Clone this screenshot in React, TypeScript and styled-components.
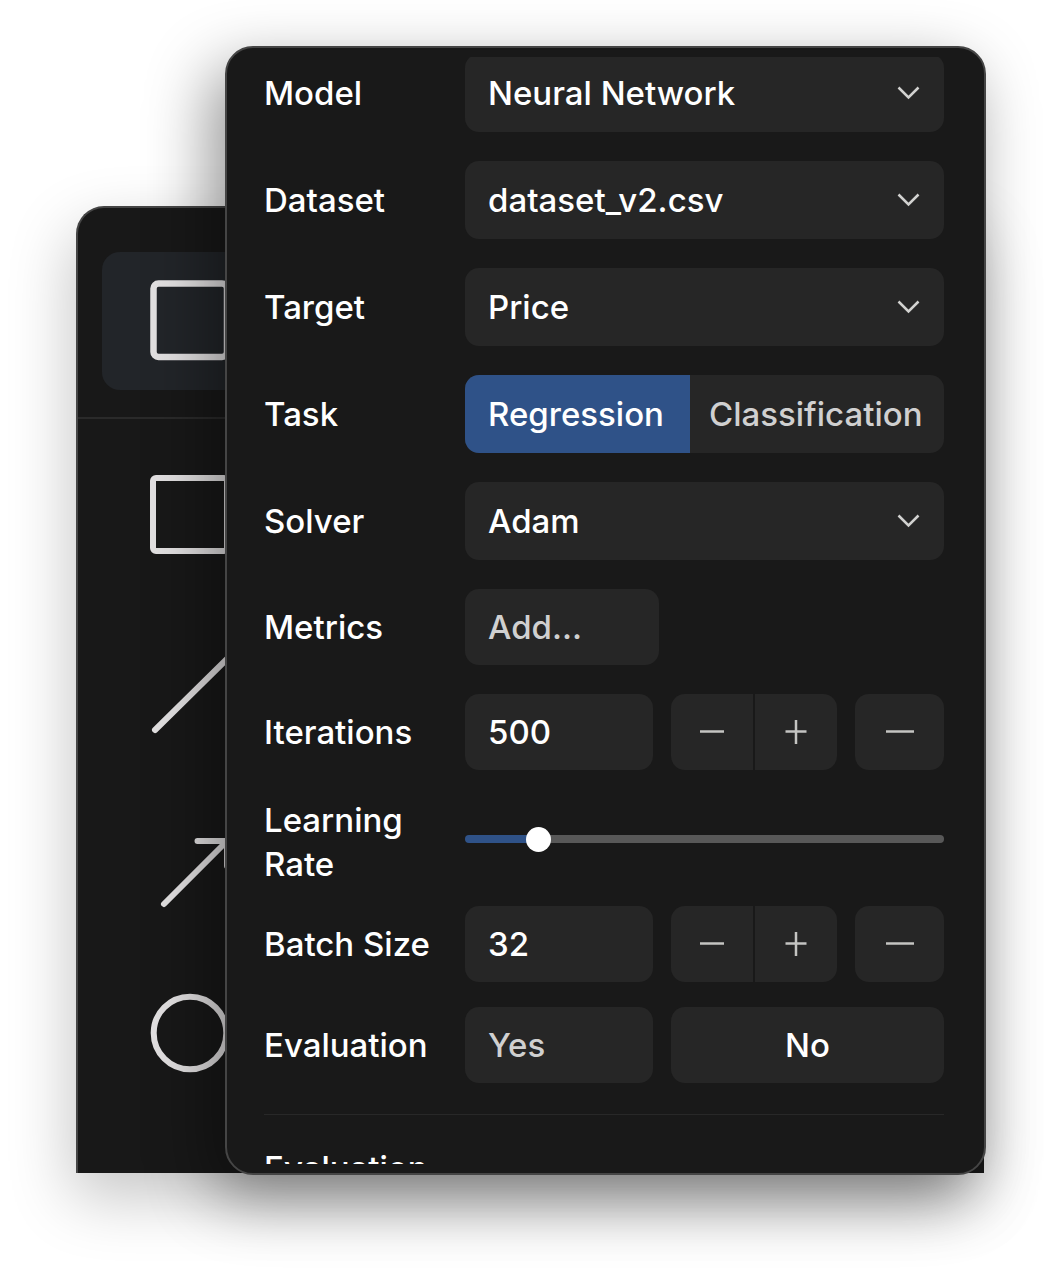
import React, { useState } from "react";
import styled, { createGlobalStyle } from "styled-components";

const color = {
  panel: "#191919",
  control: "#262626",
  border: "#454545",
  text: "#ffffff",
  muted: "#d0d0d0",
  accent: "#2f5288",
  icon: "#c4c4c2",
};

const GlobalStyle = createGlobalStyle`
  * { box-sizing: border-box; }
  body {
    margin: 0;
    background: #ffffff;
    font-family: Inter, "Liberation Sans", sans-serif;
  }
  button, input, select {
    font: inherit;
    color: inherit;
    border: 0;
    margin: 0;
    padding: 0;
    background: none;
  }
`;

const Stage = styled.main`
  display: grid;
  grid-template-columns: 76px 149px minmax(0, 1fr) 60px;
  grid-template-rows: 46px 160px auto 108px;
  min-height: 100vh;
  overflow: hidden;
`;

const ToolPanel = styled.nav`
  grid-column: 2 / 4;
  grid-row: 3;
  margin: 0 2px 2px 0;
  height: 0;
  min-height: calc(100% - 2px);
  border: 2px solid ${color.border};
  border-width: 2px 0 0 2px;
  border-radius: 28px 28px 0 0;
  background: #181818;
  box-shadow: -4px 24px 64px rgba(0, 0, 0, 0.23);
`;

const ToolGroup = styled.div<{ $header?: boolean }>`
  display: flex;
  flex-direction: column;
  gap: 35px;
  padding: ${(p) => (p.$header ? "44px 24px 27px" : "27px 24px")};
  border-bottom: ${(p) => (p.$header ? "2px solid #2a2a2a" : "0")};
`;

const ToolButton = styled.button<{ $active?: boolean }>`
  display: block;
  width: 176px;
  height: 138px;
  border-radius: 18px;
  background: ${(p) => (p.$active ? "#222529" : "transparent")};
`;

const ToolDrawing = styled.svg`
  display: block;
  fill: none;
  stroke: #e2e0e1;
  stroke-width: 6;
  stroke-linecap: round;
  stroke-linejoin: round;
`;

const SettingsPanel = styled.section`
  grid-column: 3;
  grid-row: 2 / 4;
  z-index: 1;
  padding: 9px 0;
  border: 2px solid ${color.border};
  border-radius: 28px;
  background: ${color.panel};
  color: ${color.text};
  font-size: 33px;
  font-weight: 500;
  line-height: 44px;
  box-shadow: -14px 22px 64px rgba(0, 0, 0, 0.42);
`;

const Viewport = styled.div`
  max-height: calc(100vh - 176px);
  overflow: hidden;
`;

const Form = styled.form`
  margin-top: -3px;
  padding: 0 40px 0 37px;
`;

const Row = styled.div<{ $gap?: number }>`
  display: grid;
  grid-template-columns: 201px minmax(0, 1fr);
  align-items: center;
  margin-top: ${(p) => p.$gap ?? 0}px;
`;

const Label = styled.label`
  padding-right: 24px;
`;

const SelectBox = styled.div`
  display: grid;
  align-items: center;
  height: 78px;
  border-radius: 14px;
  background: ${color.control};
`;

const Select = styled.select`
  grid-area: 1 / 1;
  width: 100%;
  height: 100%;
  padding: 0 64px 0 23px;
  border-radius: inherit;
  appearance: none;
`;

const Chevron = styled.svg`
  grid-area: 1 / 1;
  justify-self: end;
  margin-right: 24px;
  pointer-events: none;
  fill: none;
  stroke: #d2d2d0;
  stroke-width: 2.5;
`;

const Segments = styled.div`
  display: grid;
  grid-template-columns: 225fr 254fr;
  height: 78px;
  border-radius: 14px;
  overflow: hidden;
  background: ${color.control};
`;

const Segment = styled.button<{ $active?: boolean }>`
  padding: 0 19px 0 ${(p) => (p.$active ? 23 : 19)}px;
  text-align: left;
  white-space: nowrap;
  background: ${(p) => (p.$active ? color.accent : "transparent")};
  color: ${(p) => (p.$active ? color.text : color.muted)};
`;

const Controls = styled.div<{ $columns: string }>`
  display: grid;
  grid-template-columns: ${(p) => p.$columns};
  gap: 18px;
  height: 76px;
`;

const Field = styled.input`
  width: 100%;
  padding: 0 23px;
  border-radius: 14px;
  background: ${color.control};
`;

const Button = styled.button<{ $muted?: boolean; $start?: boolean }>`
  display: flex;
  align-items: center;
  justify-content: ${(p) => (p.$start ? "flex-start" : "center")};
  padding: 0 23px;
  border-radius: 14px;
  background: ${color.control};
  color: ${(p) => (p.$muted ? color.muted : color.text)};
`;

const Stepper = styled.div`
  display: grid;
  grid-template-columns: 1fr 1fr;
  gap: 2px;
  border-radius: 14px;
  overflow: hidden;
`;

const IconButton = styled.button<{ $single?: boolean }>`
  display: flex;
  align-items: center;
  justify-content: center;
  border-radius: ${(p) => (p.$single ? 14 : 0)}px;
  background: ${color.control};
`;

const Glyph = styled.svg`
  display: block;
  fill: none;
  stroke: ${color.icon};
  stroke-width: 2.5;
`;

const Slider = styled.input`
  width: 100%;
  height: 26px;
  margin-bottom: 6px;
  appearance: none;

  &::-webkit-slider-runnable-track {
    height: 8px;
    border-radius: 4px;
    background: linear-gradient(
      to right,
      ${color.accent} var(--fill),
      #585858 var(--fill)
    );
  }
  &::-webkit-slider-thumb {
    appearance: none;
    width: 25px;
    height: 25px;
    margin-top: -8px;
    border-radius: 50%;
    background: #ffffff;
  }
`;

const Divider = styled.hr`
  height: 1px;
  margin: 31px 0;
  border: 0;
  background: #282828;
`;

const SectionTitle = styled.h2`
  margin: 0;
  font: inherit;
`;

function SelectRow({ id, label, options, gap }: {
  id: string;
  label: string;
  options: string[];
  gap?: number;
}) {
  return (
    <Row $gap={gap}>
      <Label htmlFor={id}>{label}</Label>
      <SelectBox>
        <Select id={id} defaultValue={options[0]}>
          {options.map((option) => (
            <option key={option}>{option}</option>
          ))}
        </Select>
        <Chevron width="24" height="14" viewBox="0 0 24 14" aria-hidden="true">
          <path d="M2.5 1.5 12.5 11.5 22.5 1.5" />
        </Chevron>
      </SelectBox>
    </Row>
  );
}

function NumberRow({ id, label, initial, gap }: {
  id: string;
  label: string;
  initial: number;
  gap: number;
}) {
  const [value, setValue] = useState(initial);
  return (
    <Row $gap={gap}>
      <Label htmlFor={id}>{label}</Label>
      <Controls $columns="minmax(0, 1fr) 166px 89px">
        <Field
          id={id}
          inputMode="numeric"
          value={value}
          onChange={(e) => setValue(Number(e.target.value) || 0)}
        />
        <Stepper>
          <IconButton type="button" aria-label={`Decrease ${label}`} onClick={() => setValue(value - 1)}>
            <Glyph width="24" height="24" viewBox="0 0 24 24">
              <path d="M0 11.5H24" />
            </Glyph>
          </IconButton>
          <IconButton type="button" aria-label={`Increase ${label}`} onClick={() => setValue(value + 1)}>
            <Glyph width="24" height="24" viewBox="0 0 24 24">
              <path d="M1.5 11.5H22.5M12 0V24" />
            </Glyph>
          </IconButton>
        </Stepper>
        <IconButton $single type="button" aria-label={`Clear ${label}`} onClick={() => setValue(initial)}>
          <Glyph width="28" height="24" viewBox="0 0 28 24">
            <path d="M0 11.5H28" />
          </Glyph>
        </IconButton>
      </Controls>
    </Row>
  );
}

const tools = [
  { name: "Rectangle", shape: <rect x="51" y="32" width="74" height="73" rx="3" /> },
  { name: "Line", shape: <path d="M53 111 125 40" /> },
  { name: "Arrow", shape: <path d="M62 112 124 50M95.5 49H125V74" /> },
  { name: "Ellipse", shape: <circle cx="88" cy="68" r="36.3" /> },
];

export default function App() {
  const [task, setTask] = useState("Regression");
  const [rate, setRate] = useState(0.04);
  const maxRate = 0.3;
  const share = rate / maxRate;
  const fill = `calc(${share * 100}% + ${12.5 - share * 25}px)`;

  return (
    <>
      <GlobalStyle />
      <Stage>
        <ToolPanel aria-label="Tools">
          <ToolGroup $header>
            <ToolButton $active type="button" aria-label="Selected shape">
              <ToolDrawing width="176" height="138" viewBox="0 0 176 138">
                <rect x="51.5" y="31.5" width="73.5" height="73.5" rx="5" strokeWidth="6.5" />
              </ToolDrawing>
            </ToolButton>
          </ToolGroup>
          <ToolGroup>
            {tools.map((tool) => (
              <ToolButton key={tool.name} type="button" aria-label={tool.name}>
                <ToolDrawing width="176" height="138" viewBox="0 0 176 138">
                  {tool.shape}
                </ToolDrawing>
              </ToolButton>
            ))}
          </ToolGroup>
        </ToolPanel>

        <SettingsPanel>
          <Viewport>
            <Form onSubmit={(e) => e.preventDefault()}>
              <SelectRow id="model" label="Model" options={["Neural Network"]} />
              <SelectRow id="dataset" label="Dataset" options={["dataset_v2.csv"]} gap={29} />
              <SelectRow id="target" label="Target" options={["Price"]} gap={29} />
              <Row $gap={29}>
                <Label as="span" id="task-label">Task</Label>
                <Segments role="group" aria-labelledby="task-label">
                  {["Regression", "Classification"].map((name) => (
                    <Segment
                      key={name}
                      type="button"
                      $active={task === name}
                      aria-pressed={task === name}
                      onClick={() => setTask(name)}
                    >
                      {name}
                    </Segment>
                  ))}
                </Segments>
              </Row>
              <SelectRow id="solver" label="Solver" options={["Adam"]} gap={29} />
              <Row $gap={29}>
                <Label htmlFor="metrics">Metrics</Label>
                <Controls $columns="194px">
                  <Button id="metrics" type="button" $muted $start>Add…</Button>
                </Controls>
              </Row>
              <NumberRow id="iterations" label="Iterations" initial={500} gap={29} />
              <Row $gap={28}>
                <Label htmlFor="rate">Learning Rate</Label>
                <Slider
                  id="rate"
                  type="range"
                  min={0}
                  max={maxRate}
                  step={0.001}
                  value={rate}
                  onChange={(e) => setRate(Number(e.target.value))}
                  style={{ "--fill": fill } as React.CSSProperties}
                />
              </Row>
              <NumberRow id="batch" label="Batch Size" initial={32} gap={20} />
              <Row $gap={25}>
                <Label as="span" id="evaluation-label">Evaluation</Label>
                <Controls $columns="minmax(0, 1fr) 273px" role="group" aria-labelledby="evaluation-label">
                  <Button type="button" $muted $start>Yes</Button>
                  <Button type="button">No</Button>
                </Controls>
              </Row>
              <Divider />
              <SectionTitle>Evaluation</SectionTitle>
            </Form>
          </Viewport>
        </SettingsPanel>
      </Stage>
    </>
  );
}
